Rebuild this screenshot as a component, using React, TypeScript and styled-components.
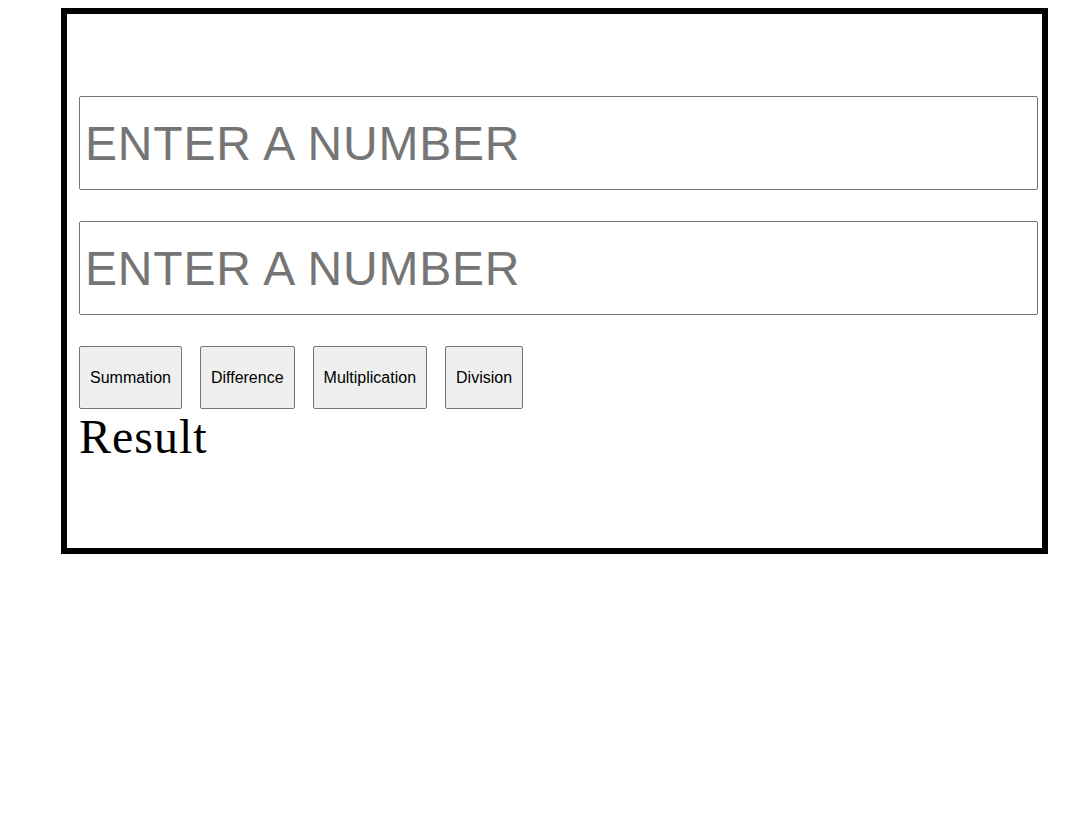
import React from "react";
import styled, { createGlobalStyle } from "styled-components";

const Global = createGlobalStyle`
  body {
    margin: 8px;
    background: #ffffff;
    font-family: "Liberation Serif", "Times New Roman", serif;
  }
`;

const Frame = styled.div`
  box-sizing: border-box;
  margin-left: 53px;
  width: 987px;
  height: 546px;
  border: 6px solid #000000;
  padding: 82px 4px 0 12px;
  display: flex;
  flex-direction: column;
`;

const NumberInput = styled.input`
  box-sizing: border-box;
  width: 959px;
  height: 94px;
  margin: 0 0 31px 0;
  padding: 1px 2px 1px 5px;
  border: 1px solid #767676;
  border-radius: 2px;
  font-family: "Liberation Sans", Arial, sans-serif;
  font-size: 48px;
  letter-spacing: 0.8px;
  color: #000;
  background: #fff;
  outline: none;
  &::placeholder {
    color: #757575;
  }
`;

const ButtonRow = styled.div`
  display: flex;
  gap: 18px;
`;

const OpButton = styled.button`
  box-sizing: border-box;
  height: 63px;
  padding: 0 10px;
  border: 1px solid #767676;
  border-radius: 2px;
  background: #efefef;
  color: #000;
  font-family: "Liberation Sans", Arial, sans-serif;
  font-size: 16px;
  cursor: pointer;
`;

const Result = styled.div`
  font-family: "Liberation Serif", "Times New Roman", serif;
  font-size: 48px;
  letter-spacing: 1px;
  color: #000;
`;

export default function App() {
  return (
    <>
      <Global />
      <Frame>
        <NumberInput type="text" placeholder="ENTER A NUMBER" />
        <NumberInput type="text" placeholder="ENTER A NUMBER" />
        <ButtonRow>
          <OpButton>Summation</OpButton>
          <OpButton>Difference</OpButton>
          <OpButton>Multiplication</OpButton>
          <OpButton>Division</OpButton>
        </ButtonRow>
        <Result>Result</Result>
      </Frame>
    </>
  );
}
